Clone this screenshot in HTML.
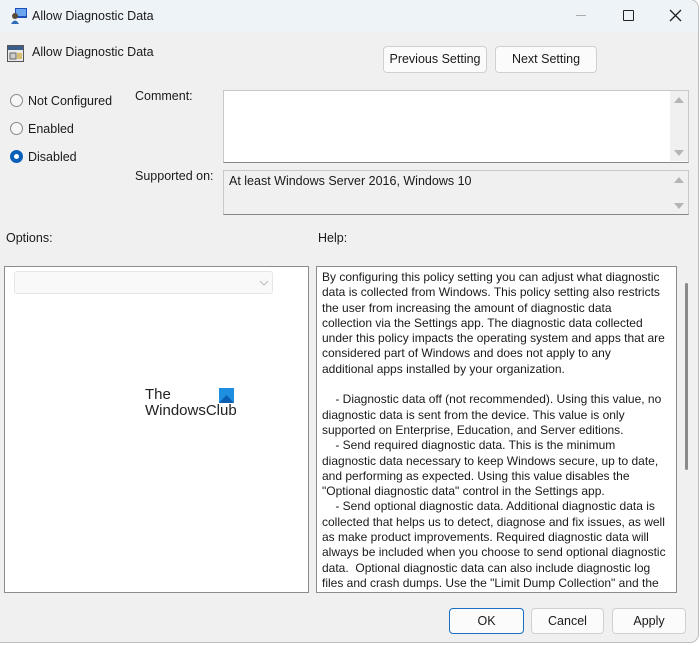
<!DOCTYPE html>
<html><head><meta charset="utf-8"><style>
*{margin:0;padding:0;box-sizing:border-box}
body{width:700px;height:646px;background:#fff;font-family:"Liberation Sans",sans-serif;font-size:12px;color:#1a1a1a;position:relative;overflow:hidden}
.win{position:absolute;left:0;top:0;width:698px;height:642px;background:#f0f0f0;outline:1px solid #bdbdbd;border-radius:0 8px 8px 0}
.tb{position:absolute;left:0;top:0;width:100%;height:32px;background:#eef3f8;border-radius:0 8px 0 0}
.a{position:absolute;white-space:nowrap}
.btn{position:absolute;background:#fbfbfb;border:1px solid #d0d0d0;border-radius:4px;text-align:center;line-height:24px;font-size:12.5px}
.box{position:absolute;border:1px solid #c8c8c8;border-bottom:1px solid #868686}
.rad{position:absolute;width:13px;height:13px;border-radius:50%;border:1px solid #8a8a8a;background:#f6f6f6}
.arr{position:absolute;width:0;height:0;border-left:5px solid transparent;border-right:5px solid transparent}
.help{position:absolute;left:316px;top:266px;width:361px;height:327px;background:#fff;border:1px solid #8c8c8c;padding:3px 0 0 5px;font-size:12px;line-height:15.3px;white-space:pre;overflow:hidden}
</style></head><body>
<div class="win">
<div class="tb"></div>
<svg class="a" style="left:10px;top:7px" width="18" height="18"><rect x="5" y="1" width="12" height="10" fill="#1e4fb8"/><rect x="6" y="2" width="10" height="7" fill="#6aa6f0"/><circle cx="5" cy="9" r="3" fill="#5a4a3a"/><path d="M1 17 Q5 10 9 17Z" fill="#2f6db5"/></svg>
<div class="a" style="left:32px;top:9px;font-size:12.5px">Allow Diagnostic Data</div>
<div class="a" style="left:576px;top:15px;width:10px;border-top:1px solid #aaa"></div>
<div class="a" style="left:623px;top:10px;width:11px;height:11px;border:1.5px solid #222;border-radius:1px"></div>
<svg class="a" style="left:669px;top:9px" width="13" height="13"><path d="M1 1L12 12M12 1L1 12" stroke="#222" stroke-width="1.3"/></svg>
<svg class="a" style="left:7px;top:45px" width="17" height="17"><rect x="0.5" y="0.5" width="16" height="16" fill="#e8e8e8" stroke="#555"/><rect x="1" y="1" width="15" height="4" fill="#3a5e8c"/><rect x="3" y="8" width="6" height="6" fill="#ccc" stroke="#666"/><rect x="10" y="8" width="5" height="6" fill="#d8c070"/></svg>
<div class="a" style="left:32px;top:45px;font-size:12.5px">Allow Diagnostic Data</div>
<div class="btn" style="left:383px;top:46px;width:104px;height:27px">Previous Setting</div>
<div class="btn" style="left:495px;top:46px;width:102px;height:27px">Next Setting</div>
<div class="rad" style="left:10px;top:94px"></div><div class="a" style="left:28px;top:94px;font-size:12.5px">Not Configured</div>
<div class="rad" style="left:10px;top:122px"></div><div class="a" style="left:28px;top:122px;font-size:12.5px">Enabled</div>
<div class="rad" style="left:10px;top:150px;border:4px solid #0a5fb8;background:#fff"></div><div class="a" style="left:28px;top:150px;font-size:12.5px">Disabled</div>
<div class="a" style="left:135px;top:89px;font-size:12.5px">Comment:</div>
<div class="box" style="left:223px;top:90px;width:466px;height:73px;background:#fff"></div>
<div class="a" style="left:670px;top:91px;width:18px;height:70px;background:#f0f0f0"></div>
<div class="arr" style="left:674px;top:97px;border-bottom:6px solid #b5b5b5"></div>
<div class="arr" style="left:674px;top:150px;border-top:6px solid #b5b5b5"></div>
<div class="a" style="left:135px;top:169px;font-size:12.5px">Supported on:</div>
<div class="box" style="left:223px;top:170px;width:466px;height:45px;background:#f0f0f0"></div>
<div class="a" style="left:229px;top:174px;font-size:12.5px">At least Windows Server 2016, Windows 10</div>
<div class="arr" style="left:674px;top:177px;border-bottom:6px solid #b5b5b5"></div>
<div class="arr" style="left:674px;top:203px;border-top:6px solid #b5b5b5"></div>
<div class="a" style="left:6px;top:231px;font-size:12.5px">Options:</div>
<div class="a" style="left:318px;top:231px;font-size:12.5px">Help:</div>
<div class="a" style="left:4px;top:266px;width:305px;height:327px;background:#fff;border:1px solid #8c8c8c"></div>
<div class="a" style="left:14px;top:271px;width:259px;height:23px;background:#f9f9f9;border:1px solid #e6e6e6;border-radius:3px"></div>
<svg class="a" style="left:259px;top:280px" width="10" height="6"><path d="M1 1L5 5L9 1" stroke="#bbb" fill="none"/></svg>
<div class="a" style="left:145px;top:387px;font-size:15px;color:#222;line-height:16px">The<br>WindowsClub</div>
<svg class="a" style="left:219px;top:388px" width="15" height="15"><rect width="15" height="15" fill="#1e8ee0"/><path d="M0 15L7.5 7L15 15Z" fill="#0a5fb0"/></svg>
<div class="help">By configuring this policy setting you can adjust what diagnostic
data is collected from Windows. This policy setting also restricts
the user from increasing the amount of diagnostic data
collection via the Settings app. The diagnostic data collected
under this policy impacts the operating system and apps that are
considered part of Windows and does not apply to any
additional apps installed by your organization.

    - Diagnostic data off (not recommended). Using this value, no
diagnostic data is sent from the device. This value is only
supported on Enterprise, Education, and Server editions.
    - Send required diagnostic data. This is the minimum
diagnostic data necessary to keep Windows secure, up to date,
and performing as expected. Using this value disables the
"Optional diagnostic data" control in the Settings app.
    - Send optional diagnostic data. Additional diagnostic data is
collected that helps us to detect, diagnose and fix issues, as well
as make product improvements. Required diagnostic data will
always be included when you choose to send optional diagnostic
data.  Optional diagnostic data can also include diagnostic log
files and crash dumps. Use the "Limit Dump Collection" and the</div>
<div class="a" style="left:685px;top:283px;width:3px;height:187px;background:#8a8a8a;border-radius:2px"></div>
<div class="btn" style="left:449px;top:608px;width:75px;height:26px;border:1px solid #1a6fc4">OK</div>
<div class="btn" style="left:531px;top:608px;width:73px;height:26px">Cancel</div>
<div class="btn" style="left:612px;top:608px;width:74px;height:26px">Apply</div>
</div>
</body></html>
